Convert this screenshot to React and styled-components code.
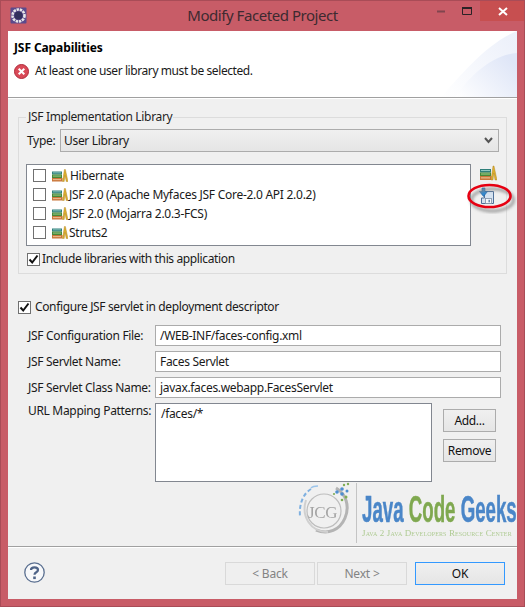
import React from "react";
import styled, { createGlobalStyle } from "styled-components";

const Global = createGlobalStyle`
  html, body { margin: 0; padding: 0; background: #c75b66; }
  * { box-sizing: border-box; }
  body { font-family: "Noto Sans", "Open Sans", sans-serif; font-size: 12px; color: #1a1a1a; }
`;

const Window = styled.div`
  position: relative; width: 525px; height: 607px; background: #c85c67;
  border: 1px solid #a94c57; display: flex; flex-direction: column; padding: 0 7px 7px; overflow: hidden;
`;
const TitleBar = styled.div`
  height: 30px; flex: none; display: flex; align-items: flex-start; margin: 0 -7px; padding-left: 9px; position: relative;
`;
const AppIcon = styled.svg`width: 17px; height: 17px; margin-top: 6px; flex: none;`;
const TitleText = styled.div`
  flex: 1; text-align: center; font-size: 15px; line-height: 30px; color: #3d2a30; letter-spacing: -0.45px; padding-left: 70px; margin-top: -1px;
`;
const Controls = styled.div`display: flex; align-items: flex-start; flex: none; margin-right: -1px;`;
const Ctrl = styled.div`
  width: ${p => p.$w}px; height: 20px; display: flex; align-items: center; justify-content: center;
  background: ${p => p.$bg || "transparent"};
`;
const Content = styled.div`flex: 1; display: flex; flex-direction: column; background: #f0f0f0; min-height: 0;`;
const Header = styled.div`
  position: relative; height: 67px; flex: none; background: #fff; border-bottom: 1px solid #a0a0a0; padding: 8px 6px 0 6px;
`;
const HeaderTitle = styled.div`font-weight: 700; font-size: 12px; line-height: 18px; color: #000; letter-spacing: -0.1px;`;
const Message = styled.div`display: flex; align-items: center; gap: 6px; margin-top: 6px; line-height: 16px; letter-spacing: -0.42px;`;
const Corner = styled.svg`position: absolute; right: 0; top: 0; width: 76px; height: 66px;`;
const Body = styled.div`position: relative; flex: 1; padding: 10px 10px 0; min-height: 0; border-top: 1px solid #fff; letter-spacing: -0.32px;`;
const Group = styled.fieldset`
  margin: 0; padding: 4px 8px 0 7px; border: 1px solid #dcdcdc; height: 165px; min-width: 0;
`;
const Legend = styled.legend`
  margin-left: 0; padding: 0 1px 0 2px; line-height: 16px; height: 16px; color: #1f1f1f;
`;
const TypeRow = styled.div`display: flex; align-items: center; height: 23px;`;
const TypeLabel = styled.span`width: 34px; flex: none; padding-left: 1px;`;
const SelectBox = styled.div`
  width: 439px; height: 23px; border: 1px solid #acacac; background: linear-gradient(#f0f0f0, #e5e5e5);
  display: flex; align-items: center; justify-content: space-between; padding: 0 5px 0 3px; flex: none;
`;
const ListRow = styled.div`display: flex; margin-top: 12px;`;
const List = styled.div`
  width: 445px; height: 82px; background: #fff; border: 1px solid #828790; padding: 1px 0 0 6px; flex: none; letter-spacing: -0.27px;
`;
const Item = styled.div`display: flex; align-items: center; height: 19px; gap: 6px;`;
const ItemLabel = styled.span`margin-left: ${p => p.$ml || 0}px;`;
const Side = styled.div`display: flex; flex-direction: column; gap: 6px; margin-left: 8px; padding-top: 1px;`;
const SideIcon = styled.svg`width: 18px; height: ${p => p.$h}px; display: block;`;
const Box = styled.span`
  width: 13px; height: 13px; flex: none; background: #fff; border: 1px solid #707070; display: inline-flex; align-items: center; justify-content: center;
`;
const CheckRow = styled.div`
  display: flex; align-items: center; gap: ${p => p.$gap}px; line-height: 16px; height: 16px; margin-top: ${p => p.$mt || 0}px; margin-left: ${p => p.$ml || 0}px;
  letter-spacing: ${p => p.$ls}px;
`;
const Form = styled.div`display: flex; flex-direction: column; gap: 5px; margin-top: 10px; padding-left: 10px;`;
const FormRow = styled.div`display: flex; align-items: ${p => p.$top ? "flex-start" : "center"};`;
const FieldLabel = styled.span`width: 127px; flex: none; line-height: 16px;`;
const Input = styled.div`
  width: 346px; height: 21px; background: #fff; border: 1px solid #ababab; padding: 0 4px; line-height: 20px; color: #1a1a1a;
`;
const TextArea = styled.div`
  width: 277px; height: 79px; background: #fff; border: 1px solid #828790; padding: 2px 5px; line-height: 16px; flex: none;
`;
const TextButtons = styled.div`display: flex; flex-direction: column; gap: 7px; margin-left: 11px; padding-top: 6px;`;
const SmallBtn = styled.div`
  width: 53px; height: 23px; border: 1px solid #acacac; background: linear-gradient(#f0f0f0, #e5e5e5);
  display: flex; align-items: center; justify-content: center; color: #111;
`;
const Logo = styled.div`
  position: absolute; left: 290px; top: 381px; width: 218px; height: 66px; display: flex; align-items: flex-start; filter: blur(0.35px);
`;
const LogoMark = styled.svg`width: 62px; height: 66px; flex: none;`;
const LogoText = styled.div`margin-left: 2px; padding-top: 13px; white-space: nowrap; width: 154px;`;
const Brand = styled.div`
  transform: scaleX(0.505); transform-origin: left top; font-family: "Liberation Sans", sans-serif; font-weight: 700;
  font-size: 37px; line-height: 34px; height: 34px; width: 154px; letter-spacing: 0; -webkit-text-stroke: 0.5px currentColor;
`;
const BrandPart = styled.span`color: ${p => p.$c};`;
const Tagline = styled.div`
  font-family: "Liberation Serif", serif; font-variant: small-caps; font-size: 9px; line-height: 10px; color: #afcb93; letter-spacing: 0.13px; margin-top: 1px;
`;
const Footer = styled.div`
  height: 53px; flex: none; border-top: 1px solid #a0a0a0; display: flex; align-items: flex-start; padding: 15px 12px 0 16px; box-shadow: inset 0 1px 0 #fff; letter-spacing: -0.2px;
`;
const Help = styled.svg`width: 21px; height: 21px; flex: none;`;
const Spacer = styled.div`flex: 1;`;
const WizBtn = styled.div`
  width: 90px; height: 23px; margin-left: ${p => p.$ml}px; display: flex; align-items: center; justify-content: center;
  border: 1px solid ${p => p.$default ? "#3399ff" : "#d9d9d9"};
  background: ${p => p.$default ? "linear-gradient(#f0f0f0, #e5e5e5)" : "#efefef"};
  color: ${p => p.$disabled ? "#838383" : "#111"};
`;
const Oval = styled.svg`position: absolute; left: 460px; top: 176px; width: 60px; height: 42px; pointer-events: none;`;

const Check = () => (
  <svg width="11" height="11" viewBox="0 0 11 11"><path d="M1.5 5.5 L4.2 8.5 L9.5 1.5" fill="none" stroke="#111" strokeWidth="2" /></svg>
);
const Checkbox = ({ on }) => <Box>{on && <Check />}</Box>;

const Books = () => (
  <svg width="16" height="13" viewBox="0 0 16 13" style={{ flex: "none" }}>
    <rect x="0" y="2.5" width="10" height="3" fill="#2f7f7a" />
    <rect x="0" y="5.5" width="10" height="3.5" fill="#46883a" />
    <rect x="0" y="9" width="10.5" height="3.5" fill="#c9763a" />
    <rect x="1" y="3.4" width="8" height=".9" fill="#8fc5c0" />
    <rect x="1" y="6.6" width="8" height=".9" fill="#a5d08e" />
    <rect x="1" y="10.2" width="8" height=".9" fill="#efc79c" />
    <path d="M10.5 12.5 L12.4 0.5 L13.4 0.5 L16 12.5 L14.2 12.5 L13 6.5 L12.2 12.5Z" fill="#dcae2f" stroke="#a87f1c" strokeWidth=".4" />
  </svg>
);
const BooksSide = () => (
  <SideIcon $h={16} viewBox="0 0 18 16">
    <rect x="1" y="4" width="11" height="3.5" fill="#2f7f7a" />
    <rect x="1" y="7.5" width="11" height="3.5" fill="#46883a" />
    <rect x="1" y="11" width="11.5" height="4" fill="#c9763a" />
    <rect x="2" y="5" width="9" height="1" fill="#8fc5c0" />
    <rect x="2" y="8.5" width="9" height="1" fill="#a5d08e" />
    <rect x="2" y="12.4" width="9" height="1" fill="#efc79c" />
    <path d="M12 15 L14 1 L15 1 L18 15 L16 15 L14.8 8 L14 15Z" fill="#dcae2f" stroke="#a87f1c" strokeWidth=".4" />
  </SideIcon>
);
const ImportIcon = () => (
  <SideIcon $h={18} viewBox="0 0 18 18">
    <path d="M5.5 4.5 H14.5 V16.5 H2.5 V11 H5.5Z" fill="#d5e2f0" stroke="#4f7099" />
    <rect x="6.5" y="11.5" width="6" height="5" fill="#f4f7fb" stroke="#7d8fa5" strokeWidth=".8" />
    <rect x="9.5" y="12.8" width="1.4" height="2.5" fill="#5d7fa6" />
    <path d="M3 1 H6 V4.5 H8.5 L4.5 9.5 L0.5 4.5 H3Z" fill="#2f88d0" stroke="#1a5e9f" strokeWidth=".6" />
  </SideIcon>
);

export default function App() {
  return (
    <>
      <Global />
      <Window>
        <TitleBar>
          <AppIcon viewBox="0 0 17 17">
            <rect x="0.5" y="0.5" width="16" height="16" rx="1" fill="#5b4a8c" />
            <circle cx="8.5" cy="8.5" r="6" fill="none" stroke="#e8e8e8" strokeWidth="2.6" strokeDasharray="2.4 .8" />
            <circle cx="8.5" cy="8.5" r="4" fill="#33305c" />
          </AppIcon>
          <TitleText>Modify Faceted Project</TitleText>
          <Controls>
            <Ctrl $w={26}><svg width="9" height="3" viewBox="0 0 9 3"><rect y="0.5" width="8" height="2" fill="#80454e" /></svg></Ctrl>
            <Ctrl $w={26}><svg width="11" height="9" viewBox="0 0 11 9"><path d="M0.5 1.5 H9.5 V7.5 H0.5Z" fill="none" stroke="#2a2226" /><rect width="10" height="2" fill="#2a2226" /></svg></Ctrl>
            <Ctrl $w={45} $bg="#c74f50"><svg width="10" height="9" viewBox="0 0 10 9"><path d="M1 1 L9 8 M9 1 L1 8" stroke="#fff" strokeWidth="2" /></svg></Ctrl>
          </Controls>
        </TitleBar>
        <Content>
          <Header>
            <HeaderTitle>JSF Capabilities</HeaderTitle>
            <Message>
              <svg width="15" height="15" viewBox="0 0 15 15" style={{ flex: "none" }}>
                <circle cx="7.5" cy="7.5" r="7" fill="#d94a58" stroke="#b02a3a" />
                <path d="M4.7 4.7 L10.3 10.3 M10.3 4.7 L4.7 10.3" stroke="#fff" strokeWidth="2" />
              </svg>
              At least one user library must be selected.
            </Message>
            <Corner viewBox="0 0 76 66">
              <defs>
                <linearGradient id="cg" x1="0" y1="1" x2="1" y2="0.3">
                  <stop offset="0" stopColor="#fff" />
                  <stop offset="1" stopColor="#dfe6f7" />
                </linearGradient>
              </defs>
              <path d="M0 66 C20 44 46 12 76 0 V66Z" fill="url(#cg)" opacity=".55" />
              <path d="M14 66 C28 46 50 24 76 22 V66Z" fill="url(#cg)" />
            </Corner>
          </Header>
          <Body>
            <Group>
              <Legend>JSF Implementation Library</Legend>
              <TypeRow>
                <TypeLabel>Type:</TypeLabel>
                <SelectBox>
                  User Library
                  <svg width="9" height="7" viewBox="0 0 9 7"><path d="M1 1 L4.5 5 L8 1" fill="none" stroke="#555" strokeWidth="2" /></svg>
                </SelectBox>
              </TypeRow>
              <ListRow>
                <List>
                  <Item><Checkbox /><Books /><ItemLabel $ml={-4}>Hibernate</ItemLabel></Item>
                  <Item><Checkbox /><Books /><ItemLabel $ml={-5}>JSF 2.0 (Apache Myfaces JSF Core-2.0 API 2.0.2)</ItemLabel></Item>
                  <Item><Checkbox /><Books /><ItemLabel $ml={-5}>JSF 2.0 (Mojarra 2.0.3-FCS)</ItemLabel></Item>
                  <Item><Checkbox /><Books /><ItemLabel $ml={-5}>Struts2</ItemLabel></Item>
                </List>
                <Side>
                  <BooksSide />
                  <ImportIcon />
                </Side>
              </ListRow>
              <CheckRow $mt={5} $ml={1} $gap={2} $ls={-0.37}><Checkbox on />Include libraries with this application</CheckRow>
            </Group>
            <CheckRow $mt={25} $gap={4} $ls={-0.37}><Checkbox on />Configure JSF servlet in deployment descriptor</CheckRow>
            <Form>
              <FormRow><FieldLabel>JSF Configuration File:</FieldLabel><Input>/WEB-INF/faces-config.xml</Input></FormRow>
              <FormRow><FieldLabel>JSF Servlet Name:</FieldLabel><Input>Faces Servlet</Input></FormRow>
              <FormRow><FieldLabel>JSF Servlet Class Name:</FieldLabel><Input>javax.faces.webapp.FacesServlet</Input></FormRow>
              <FormRow $top>
                <FieldLabel>URL Mapping Patterns:</FieldLabel>
                <TextArea>/faces/*</TextArea>
                <TextButtons>
                  <SmallBtn>Add...</SmallBtn>
                  <SmallBtn>Remove</SmallBtn>
                </TextButtons>
              </FormRow>
            </Form>
            <Logo>
              <LogoMark viewBox="0 0 62 66">
                <path d="M13 9 C5 14 1 24 2 36" fill="none" stroke="#7fb0e0" strokeWidth="2" strokeDasharray="4 2.5" />
                <path d="M20 6 C16 6 14 7 13 8" fill="none" stroke="#9cc4ea" strokeWidth="1.5" />
                <path d="M38 8 C48 14 52 26 47 38 C42 50 30 55 18 50" fill="none" stroke="#b4b4b4" strokeWidth="3" />
                <path d="M8 20 C3 36 12 52 30 52" fill="none" stroke="#d0d0d0" strokeWidth="2" />
                <circle cx="26" cy="31" r="17" fill="none" stroke="#bdbdbd" strokeWidth="1.2" />
                <text x="10" y="38" fontFamily="Liberation Serif, serif" fontSize="17" fill="#a4a4a4">JCG</text>
                <g fill="#4f8fd0">
                  <circle cx="39" cy="12" r="1.8" /><circle cx="44" cy="9" r="1.8" /><circle cx="44" cy="14" r="1.8" /><circle cx="49" cy="11" r="1.5" />
                </g>
                <g fill="#7fae55">
                  <circle cx="50" cy="4" r="1.2" /><circle cx="46" cy="5" r="1.2" /><circle cx="48" cy="17" r="1.5" /><circle cx="44" cy="20" r="1.3" /><circle cx="36" cy="14" r="1.1" />
                </g>
                <rect x="58" y="3" width="1" height="60" fill="#c4c4c4" />
              </LogoMark>
              <LogoText>
                <Brand>
                  <BrandPart $c="#4a86c8">Java </BrandPart>
                  <BrandPart $c="#7fa84f">Code </BrandPart>
                  <BrandPart $c="#4a86c8">Geeks</BrandPart>
                </Brand>
                <Tagline>Java 2 Java Developers Resource Center</Tagline>
              </LogoText>
            </Logo>
          </Body>
          <Footer>
            <Help viewBox="0 0 21 21">
              <circle cx="10.5" cy="10.5" r="9.7" fill="#f7f8fa" stroke="#5a6f90" strokeWidth="1.3" />
              <path d="M7 8 C7 4.5 14 4.5 14 8 C14 10.5 10.5 10 10.5 12.8" fill="none" stroke="#4f6488" strokeWidth="2.2" />
              <rect x="9.2" y="14.5" width="2.6" height="2.6" fill="#4f6488" />
            </Help>
            <Spacer />
            <WizBtn $disabled $ml={0}>&lt; Back</WizBtn>
            <WizBtn $disabled $ml={2}>Next &gt;</WizBtn>
            <WizBtn $default $ml={8}>OK</WizBtn>
          </Footer>
        </Content>
        <Oval viewBox="0 0 60 42">
          <defs><filter id="sh"><feGaussianBlur stdDeviation="1.6" /></filter></defs>
          <ellipse cx="30" cy="21" rx="21" ry="11" fill="none" stroke="#8a8a8a" strokeWidth="3" filter="url(#sh)" opacity=".8" transform="translate(1.5 2)" />
          <ellipse cx="28.5" cy="19" rx="21" ry="11" fill="none" stroke="#e60012" strokeWidth="2.6" />
        </Oval>
      </Window>
    </>
  );
}
